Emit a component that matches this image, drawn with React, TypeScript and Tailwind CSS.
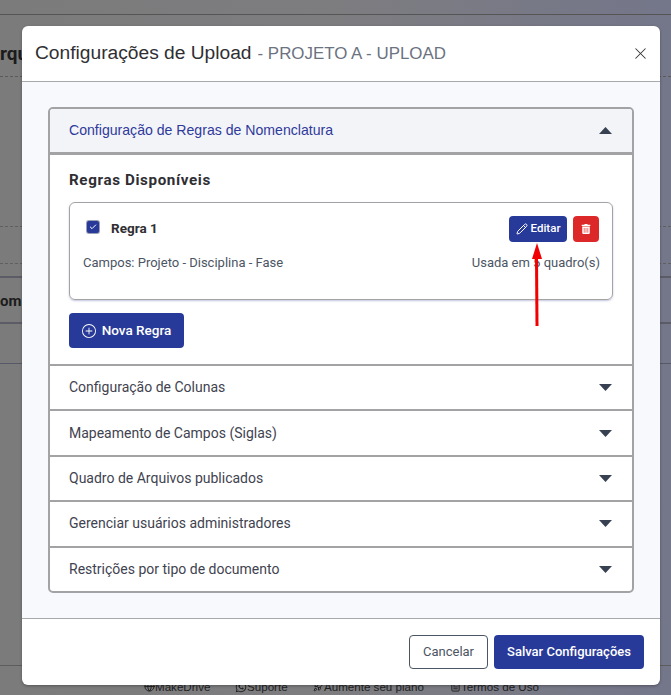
import { LuPencil, LuX, LuCheck, LuGlobe, LuRocket, LuFileText } from "react-icons/lu";
import { BsPlusCircle } from "react-icons/bs";
import { FaTrashAlt, FaWhatsapp } from "react-icons/fa";

const closedSections = [
  "Configuração de Colunas",
  "Mapeamento de Campos (Siglas)",
  "Quadro de Arquivos publicados",
  "Gerenciar usuários administradores",
  "Restrições por tipo de documento",
];

const Caret = ({ up }: { up?: boolean }) => (
  <svg width="13" height="7" viewBox="0 0 13 7" className="fill-[#374151]">
    <path d={up ? "M6.5 0 13 7H0Z" : "M0 0h13L6.5 7Z"} />
  </svg>
);

const Backdrop = () => (
  <div className="absolute inset-0 overflow-hidden bg-[linear-gradient(90deg,#7b7b7b_0%,#7d7d80_50%,#74768a_100%)]">
    <div className="h-[15px] border-b border-[#555]" />
    <p className="absolute left-0 top-[40px] text-[19px] font-bold text-[#1c1c1c]">rqu</p>
    <div className="absolute left-0 right-0 top-[76px] border-t border-dashed border-[#5a5a5a]" />
    <div className="absolute left-0 right-0 top-[226px] border-t border-dashed border-[#5f5f5f]" />
    <div className="absolute left-0 right-0 top-[263px] border-t border-dashed border-[#5f5f5f]" />
    <div className="absolute left-0 right-0 top-[276px] border-t-2 border-[#5c5c66]" />
    <p className="absolute left-0 top-[290px] text-[15px] font-bold text-[#1c1c1c]">om</p>
    <div className="absolute left-0 right-0 top-[322px] border-t-2 border-[#5c5c66]" />
    <div className="absolute left-0 right-0 top-[363px] border-t border-[#555a66]" />
    <div className="absolute left-0 right-0 top-[665px] border-t border-[#5c5c5c]" />
    <div className="absolute left-[144px] top-[679px] flex font-['Liberation_Sans',sans-serif] text-[11.6px] leading-[15px] text-[#1f1f1f]">
      <span className="flex w-[91px] items-center"><LuGlobe size={11} />MakeDrive</span>
      <span className="flex w-[78px] items-center"><FaWhatsapp size={12} />Suporte</span>
      <span className="flex w-[137px] items-center"><LuRocket size={11} />Aumente seu plano</span>
      <span className="flex items-center"><LuFileText size={11} />Termos de Uso</span>
    </div>
  </div>
);

const App = () => {
  return (
    <div className="relative h-[695px] w-[671px] overflow-hidden font-['Roboto','Liberation_Sans',sans-serif]">
      <Backdrop />
      <div className="absolute left-[22px] top-[26px] flex h-[659px] w-[638px] flex-col overflow-hidden rounded-[6px] bg-white shadow-[0_1px_3px_rgba(0,0,0,0.3)]">
        <header className="flex h-[56px] shrink-0 items-center justify-between border-b border-[#a8a9ad] pl-[13px] pr-[10px] font-['Liberation_Sans',sans-serif]">
          <div className="flex items-baseline">
            <h2 className="text-[19.2px] text-[#2f2f33]">Configurações de Upload</h2>
            <span className="ml-[6px] text-[16.9px] text-[#6b7280]">- PROJETO A - UPLOAD</span>
          </div>
          <LuX className="text-[#333]" size={19} strokeWidth={1.3} />
        </header>

        <main className="flex-1 bg-[#f8f9fc] px-[26px] pt-[25px]">
          <section className="overflow-hidden rounded-[5px] border-x-[2px] border-t-[2px] border-b-[2px] border-[#a3a3a6] bg-white">
            <div className="box-content flex h-[43px] items-center justify-between border-b-[3px] border-[#a3a3a6] bg-[#f3f4f8] pl-[19px] pr-[20px]">
              <span className="font-['Liberation_Sans',sans-serif] text-[14.1px] text-[#2f3a9c]">Configuração de Regras de Nomenclatura</span>
              <Caret up />
            </div>

            <div className="h-[209px] px-[19px] pt-[17px]">
              <h3 className="text-[15.2px] font-bold leading-[16px] tracking-[0.62px] text-[#2f2f33]">Regras Disponíveis</h3>
              <div className="mt-[14px] h-[98px] rounded-[6px] border border-[#a3a3a6] pl-[13px] pr-[12px] pt-[13px] shadow-[0_1px_2px_rgba(80,90,160,0.35)]">
                <div className="mr-[1px] flex items-center justify-between">
                  <div className="flex items-center">
                    <span className="ml-[4px] flex h-[12px] w-[12px] -translate-y-[2px] items-center justify-center rounded-[2px] bg-[#283a99] ring-1 ring-[#9ca0b5]">
                      <LuCheck className="text-white" size={8} strokeWidth={3} />
                    </span>
                    <span className="ml-[12px] pb-[2px] text-[13.5px] font-bold text-[#2f2f33]">Regra 1</span>
                  </div>
                  <div className="flex gap-[6px]">
                    <button className="flex h-[26px] w-[58px] items-center justify-center gap-[3px] rounded-[4px] bg-[#283a99] text-[11.5px] font-medium text-white">
                      <LuPencil size={12} />
                      Editar
                    </button>
                    <button className="flex h-[26px] w-[26px] items-center justify-center rounded-[4px] bg-[#dc2828] text-white">
                      <FaTrashAlt size={10} />
                    </button>
                  </div>
                </div>
                <div className="mt-[14px] flex justify-between text-[13px] leading-[14px] text-[#4b5563]">
                  <span>Campos: Projeto - Disciplina - Fase</span>
                  <span>Usada em 5 quadro(s)</span>
                </div>
              </div>
              <button className="mt-[13px] flex h-[35px] w-[115px] items-center justify-center gap-[6px] rounded-[4px] bg-[#283a99] text-[13.5px] font-medium text-white">
                <BsPlusCircle size={14} />
                Nova Regra
              </button>
            </div>

            {closedSections.map((label) => (
              <div
                key={label}
                className="box-content flex h-[43.4px] items-center justify-between border-t-[2px] border-[#a3a3a6] pl-[19px] pr-[20px]"
              >
                <span className="text-[14px] text-[#3f4350]">{label}</span>
                <Caret />
              </div>
            ))}
          </section>
        </main>

        <footer className="flex h-[67px] shrink-0 items-start justify-end gap-[6px] border-t border-[#a8a9ad] pr-[16px] pt-[16px]">
          <button className="h-[34px] w-[79px] rounded-[4px] border border-[#4b5563] bg-white text-[13px] text-[#4b5563]">
            Cancelar
          </button>
          <button className="h-[34px] w-[150px] rounded-[4px] bg-[#283a99] text-[13px] font-medium text-white">
            Salvar Configurações
          </button>
        </footer>
      </div>

      {/* red annotation arrow */}
      <svg className="absolute left-[525px] top-[240px]" width="24" height="88" viewBox="0 0 24 88">
        <path d="M12 86 11.5 16" stroke="#f00000" strokeWidth="3" fill="none" />
        <path d="M7 19 12 3l5 16Z" fill="#f00000" />
      </svg>
    </div>
  );
};

export default App;
